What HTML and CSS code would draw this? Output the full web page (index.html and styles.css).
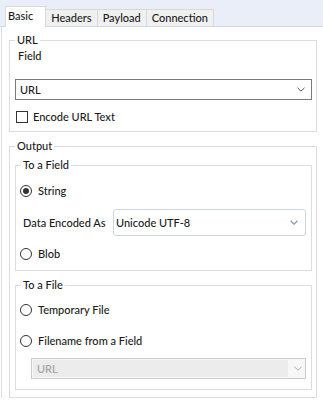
FILE: index.html
```html
<!DOCTYPE html>
<html lang="en">
<head>
  <meta charset="UTF-8">
  <title>Download - Configuration</title>
  <link rel="stylesheet" href="styles.css">
</head>
<body>

  <div class="tabs">
    <div class="tab active">Basic</div>
    <div class="tab">Headers</div>
    <div class="tab">Payload</div>
    <div class="tab">Connection</div>
  </div>

  <div class="panel">

    <fieldset class="group group-url">
      <legend>URL</legend>
      <div class="row label">Field</div>
      <div class="select select-url">
        <span>URL</span>
        <svg class="chevron" width="8" height="5" viewBox="0 0 8 5"><polyline points="0.5,0.8 4,4.2 7.5,0.8" fill="none" stroke="#555" stroke-width="1"/></svg>
      </div>
      <label class="row check">
        <span class="box"></span>
        Encode URL Text
      </label>
    </fieldset>

    <fieldset class="group group-output">
      <legend>Output</legend>

      <fieldset class="group sub sub-field">
        <legend>To a Field</legend>
        <label class="row radio">
          <span class="dot checked"></span>
          String
        </label>
        <div class="encoded">
          <span class="encoded-label">Data Encoded As</span>
          <div class="select select-soft">
            <span>Unicode UTF-8</span>
            <svg class="chevron" width="8" height="5" viewBox="0 0 8 5"><polyline points="0.6,0.8 4,4.2 7.4,0.8" fill="none" stroke="#8d9bb5" stroke-width="1.3"/></svg>
          </div>
        </div>
        <label class="row radio radio-blob">
          <span class="dot"></span>
          Blob
        </label>
      </fieldset>

      <fieldset class="group sub sub-file">
        <legend>To a File</legend>
        <label class="row radio">
          <span class="dot"></span>
          Temporary File
        </label>
        <label class="row radio radio-gap">
          <span class="dot"></span>
          Filename from a Field
        </label>
        <div class="select select-disabled">
          <span class="disabled-text">URL</span>
          <svg class="chevron" width="8" height="5" viewBox="0 0 8 5"><polyline points="0.5,0.8 4,4.2 7.5,0.8" fill="none" stroke="#a9a9a9" stroke-width="1"/></svg>
        </div>
      </fieldset>
    </fieldset>

  </div>

</body>
</html>
```

FILE: styles.css
```css
:root {
  --texto: #1b1b1b;
  --borde-grupo: #dcdcdc;
  --fondo-tabs: #eaeef8;
}

body {
  margin: 0;
  font-family: Lato, "Noto Sans", sans-serif;
  font-size: 11px;
  font-weight: 500;
  color: var(--texto);
  background: #fff;
}

/* TABS */
.tabs {
  display: flex;
  align-items: flex-end;
  height: 27px;
  padding-left: 5px;
  background: var(--fondo-tabs);
  border-bottom: 1px solid #d3d7df;
  box-sizing: border-box;
}

.tab {
  height: 16px;
  line-height: 16px;
  padding: 0 5px;
  background: #f0f0f0;
  border: 1px solid #d9d9d9;
  border-bottom: none;
  margin-right: -1px;
}

.tab.active {
  height: 20px;
  line-height: 18px;
  padding: 0 12px 0 2px;
  background: #fff;
  margin-bottom: -1px;
  position: relative;
}

/* PANEL */
.panel {
  border-left: 1px solid #dedede;
  margin-left: 1px;
  padding: 5px 6px 0 7px;
}

/* GROUPS */
.group {
  margin: 0;
  padding: 0 4px 6px 5px;
  border: 1px solid var(--borde-grupo);
  min-width: 0;
}

legend {
  padding: 0 2px;
  line-height: 16px;
}

.row {
  display: flex;
  align-items: center;
  height: 16px;
  line-height: 16px;
}

.label {
  padding-left: 3px;
}

.select-url {
  margin-top: 15px;
}

.check {
  margin-top: 9px;
  gap: 5px;
  padding-left: 1px;
}

.box {
  width: 10px;
  height: 10px;
  border: 1px solid #333;
  background: #fff;
}

.group-output {
  margin-top: 6px;
  padding-bottom: 7px;
}

.sub {
  margin-top: 3px;
  padding: 0 5px 8px 4px;
}

.sub legend {
  margin-left: 1px;
}

.sub-file {
  margin-top: 6px;
  padding-bottom: 10px;
}

/* RADIOS */
.radio {
  margin-top: 10px;
  gap: 6px;
}

.sub-file .radio {
  margin-top: 9px;
}

.sub-file .radio-gap {
  margin-top: 15px;
}

.dot {
  width: 10px;
  height: 10px;
  border: 1px solid #333;
  border-radius: 50%;
  display: flex;
  align-items: center;
  justify-content: center;
  background: #fff;
}

.dot.checked::after {
  content: "";
  width: 6px;
  height: 6px;
  border-radius: 50%;
  background: #333;
}

/* SELECTS */
.select {
  display: flex;
  align-items: center;
  justify-content: space-between;
  box-sizing: border-box;
  height: 21px;
  padding: 0 6px 0 4px;
  border: 1px solid #7a7a7a;
  background: #fff;
}

.chevron {
  display: block;
}

.encoded {
  display: flex;
  align-items: center;
  margin-top: 10px;
  padding-left: 3px;
}

.encoded-label {
  width: 90px;
  flex: none;
}

.select-soft {
  flex: 1;
  height: 27px;
  border: 1px solid #cdd5e3;
  border-radius: 3px;
  padding: 0 7px 0 2px;
}

.select-disabled {
  margin: 9px 0 0 11px;
  padding: 0 3px 0 0;
  border: 1px solid #cccccc;
  background: #f7f7f7;
  color: #a3a3a3;
}

.disabled-text {
  flex: 1;
  align-self: stretch;
  display: flex;
  align-items: center;
  padding-left: 4px;
  margin: 1px 6px 1px 1px;
  background: #ececec;
}
```
